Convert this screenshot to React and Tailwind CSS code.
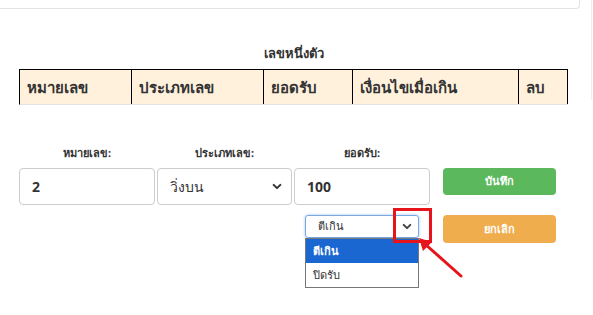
import React from "react";

const font = { fontFamily: '"Noto Sans", "DejaVu Sans", Tahoma, sans-serif' };

function Chevron({ className }) {
  return (
    <svg viewBox="0 0 12 8" className={className} fill="none" stroke="currentColor" strokeWidth="2.4" strokeLinecap="round" strokeLinejoin="round">
      <path d="M2 2l4 4 4-4" />
    </svg>
  );
}

export default function App() {
  const cols = [
    { label: "หมายเลข", w: "w-[112px]" },
    { label: "ประเภทเลข", w: "w-[132px]" },
    { label: "ยอดรับ", w: "w-[90px]" },
    { label: "เงื่อนไขเมื่อเกิน", w: "w-[166px]" },
    { label: "ลบ", w: "w-[49px]" },
  ];

  return (
    <div className="relative w-[593px] h-[315px] bg-white overflow-hidden text-[#333]" style={font}>
      {/* top panel edge */}
      <div className="h-[9px] w-[580px] border-b border-r border-[#e3e3e3] rounded-br-[4px]" />
      <div className="absolute right-[1px] top-0 h-[100px] w-px bg-[#eeeeee]" />

      <div className="pl-[19px]">
        <div className="w-[549px] text-center font-bold text-[13px] leading-[18px] mt-[35px]">เลขหนึ่งตัว</div>

        {/* table header */}
        <div className="flex w-[549px] mt-[7px] border-t-[1.5px] border-l-[1.5px] border-black bg-[#fff1dc] border-b border-b-[#e3e3e3]">
          {cols.map((c) => (
            <div key={c.label} className={`${c.w} h-[34px] border-r-[1.5px] border-black flex items-center px-[7px] font-bold text-[15px]`}>
              {c.label}
            </div>
          ))}
        </div>

        {/* form row 1 */}
        <div className="flex items-end mt-[41px]">
          <div className="flex gap-[2px]">
            <div className="w-[136px] flex flex-col items-center">
              <div className="text-[11px] font-bold leading-[14px] mb-[8px]">หมายเลข:</div>
              <div className="w-full h-[37px] border border-[#cccccc] rounded-[4px] flex items-center px-[12px] font-bold text-[14px]">2</div>
            </div>
            <div className="w-[135px] flex flex-col items-center">
              <div className="text-[11px] font-bold leading-[14px] mb-[8px]">ประเภทเลข:</div>
              <div className="w-full h-[37px] border border-[#cccccc] rounded-[4px] flex items-center justify-between pl-[12px] pr-[9px] text-[14px]">
                <span>วิ่งบน</span>
                <Chevron className="w-[10px] h-[7px] text-[#333]" />
              </div>
            </div>
            <div className="w-[136px] flex flex-col items-center">
              <div className="text-[11px] font-bold leading-[14px] mb-[8px]">ยอดรับ:</div>
              <div className="w-full h-[37px] border border-[#cccccc] rounded-[4px] flex items-center px-[12px] font-bold text-[14px]">100</div>
            </div>
          </div>
          <div className="ml-[13px] mb-[10px] w-[113px] h-[27px] rounded-[4px] bg-[#5cb85c] text-white text-[11px] font-bold flex items-center justify-center">
            บันทึก
          </div>
        </div>

        {/* form row 2 */}
        <div className="flex mt-[10px]">
          <div className="w-[411px] flex justify-end pr-[11px]">
            <div className="relative w-[114px]">
              <div className="h-[23px] border border-[#7aa7e0] rounded-[3px] shadow-[0_0_3px_#9cc3f5] flex items-center justify-between pl-[12px] pr-[6px] text-[11px]">
                <span>ตีเกิน</span>
                <Chevron className="w-[10px] h-[7px] text-[#444]" />
              </div>
              <div className="absolute left-0 top-[23px] w-[114px] border border-[#767676] bg-white text-[11px] z-10">
                <div className="h-[24px] bg-[#1a67d2] text-white font-bold flex items-center pl-[7px]">ตีเกิน</div>
                <div className="h-[24px] flex items-center pl-[7px]">ปิดรับ</div>
              </div>
            </div>
          </div>
          <div className="ml-[13px] w-[113px] h-[28px] rounded-[4px] bg-[#f0ad4e] text-white text-[11px] font-bold flex items-center justify-center">
            ยกเลิก
          </div>
        </div>
      </div>

      {/* annotation */}
      <svg className="absolute left-0 top-0 z-20 pointer-events-none" width="593" height="315">
        <rect x="394.5" y="209.5" width="36" height="32" fill="none" stroke="#e8141b" strokeWidth="3" />
        <line x1="461" y1="276" x2="425" y2="244" stroke="#e8141b" strokeWidth="3" strokeLinecap="round" />
        <path d="M419 238 L432 242 L423 251 Z" fill="#e8141b" />
      </svg>
    </div>
  );
}
